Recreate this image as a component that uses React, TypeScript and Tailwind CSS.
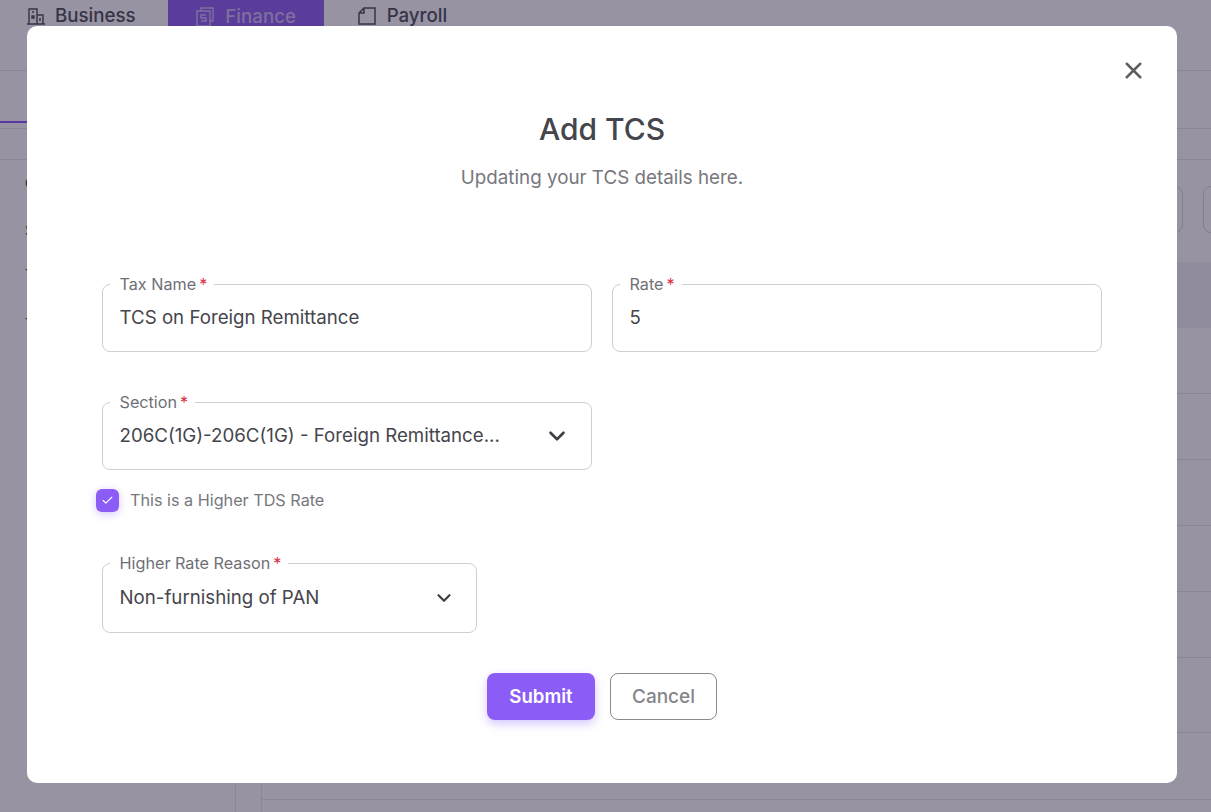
import { ChevronDown, X, Check } from "lucide-react";

const rows = [66, 66, 66, 66, 66, 75, 67];

const FloatLabel = ({ text }: { text: string }) => (
  <span className="absolute left-[6.5px] top-[-11px] flex h-[20px] items-center bg-white pl-[10px] pr-[7px] text-[16.2px] leading-[20px] text-[#6f6f76]">
    {text}
    <span className="ml-[3px] text-[#dc2f45]">*</span>
  </span>
);

const TextField = ({ label, value }: { label: string; value: string }) => (
  <div className="relative flex h-[68px] w-[490px] items-center rounded-[8px] border border-[#cfcfd2] pl-[16.5px] text-[18.7px] text-[#45454c]">
    <FloatLabel text={label} />
    <span>{value}</span>
  </div>
);

const SelectField = ({
  label,
  value,
  className,
  iconSize,
}: {
  label: string;
  value: string;
  className: string;
  iconSize: number;
}) => (
  <div
    className={`relative flex items-center justify-between rounded-[8px] border border-[#cfcfd2] pl-[16.5px] pr-[21px] text-[18.7px] text-[#45454c] ${className}`}
  >
    <FloatLabel text={label} />
    <span className="whitespace-nowrap">{value}</span>
    <ChevronDown size={iconSize} strokeWidth={2.4} className="text-[#3f3f46]" />
  </div>
);

const App = () => {
  return (
    <div className="relative h-[812px] w-[1211px] overflow-hidden bg-white font-['Inter',sans-serif]">
      {/* page behind the modal */}
      <div className="flex h-[71px] border-b border-[#e4e4e7] pl-[26px] text-[18.7px] font-medium text-[#3f3f46]">
        <div className="flex h-[32px] items-center gap-[9px]">
          <svg width="20" height="18" viewBox="0 0 20 18" fill="none" stroke="currentColor" strokeWidth="1.4">
            <path d="M1 17h18M3 17V2h8v15M11 8h6v9M6 5h2M6 9h2v2H6zM14 11v3" />
          </svg>
          <span>Business</span>
        </div>
        <div className="ml-[32px] flex h-[70px] w-[156px] items-start justify-center gap-[11px] bg-[#8450f0] pl-[1px] pt-[3px] text-white/60">
          <svg width="18" height="20" viewBox="0 0 18 20" fill="none" stroke="currentColor" strokeWidth="1.4" className="mt-[4px]">
            <path d="M5 4V1h12v13h-3M1 4h13v15H1zM10 8H5v3h5v3H5" />
          </svg>
          <span>Finance</span>
        </div>
        <div className="ml-[34px] flex h-[32px] items-center gap-[11px]">
          <svg width="18" height="18" viewBox="0 0 18 18" fill="none" stroke="currentColor" strokeWidth="1.5">
            <path d="M6 1h11v16H1V6zM6 1v5H1" />
          </svg>
          <span>Payroll</span>
        </div>
      </div>

      <div className="h-[58px] border-b border-[#e4e4e7] pt-[50px]">
        <div className="h-[2px] w-[60px] bg-[#7c4dff]" />
      </div>
      <div className="h-[31px] border-b border-[#e4e4e7]" />

      <div className="flex h-[652px]">
        <aside className="flex w-[236px] flex-col border-r border-[#e4e4e7] pl-[25px] text-[16px] text-[#27272a]">
          <span className="mt-[11px] font-semibold">Charges</span>
          <span className="mt-[23px]">Sales</span>
          <span className="mt-[21px]">TDS</span>
          <span className="mt-[25px]">TCS</span>
        </aside>
        <div className="ml-[25px] flex-1 border-l border-[#e4e4e7]">
          <div className="flex h-[102px] justify-end gap-[20px] pt-[26px]">
            <div className="h-[47px] w-[80px] rounded-[8px] border border-[#d4d4d8]" />
            <div className="mr-[-60px] h-[47px] w-[68px] rounded-[8px] border border-[#d4d4d8]" />
          </div>
          <div className="h-[66px] bg-[#f1f1f4]" />
          {rows.map((h, i) => (
            <div key={i} className="border-b border-[#e4e4e7]" style={{ height: h }} />
          ))}
        </div>
      </div>

      {/* modal */}
      <div className="absolute inset-0 bg-[#2f2745]/50 pl-[27px] pt-[26px]">
        <div className="relative h-[757px] w-[1150px] rounded-[10px] bg-white px-[75px]">
          <button className="absolute right-[30.5px] top-[31px] text-[#5f5f63]">
            <X size={27} strokeWidth={2.2} />
          </button>

          <h2 className="pt-[84px] text-center text-[30px] leading-[38px] font-medium text-[#45454c]">
            Add TCS
          </h2>
          <p className="mt-[16px] text-center text-[18.8px] leading-[28px] text-[#77777e]">
            Updating your TCS details here.
          </p>

          <div className="mt-[92px] flex gap-[20px]">
            <TextField label="Tax Name" value="TCS on Foreign Remittance" />
            <TextField label="Rate" value="5" />
          </div>

          <SelectField
            label="Section"
            value="206C(1G)-206C(1G) - Foreign Remittance..."
            className="mt-[50px] h-[68px] w-[490px]"
            iconSize={26}
          />

          <label className="mt-[18px] ml-[-6px] flex items-center gap-[11px]">
            <span className="flex h-[23px] w-[23px] items-center justify-center rounded-[6px] bg-[#8b5cf6] shadow-[0_2px_8px_rgba(139,92,246,0.35)]">
              <Check size={13} strokeWidth={2} className="text-white" />
            </span>
            <span className="text-[16.2px] text-[#77777e]">This is a Higher TDS Rate</span>
          </label>

          <SelectField
            label="Higher Rate Reason"
            value="Non-furnishing of PAN"
            className="mt-[51px] h-[70px] w-[375px]"
            iconSize={22}
          />

          <div className="mt-[40px] flex justify-center gap-[15px]">
            <button className="h-[47px] w-[108px] rounded-[8px] bg-[#8b5cf6] text-[18.6px] font-semibold text-white shadow-[0_4px_10px_rgba(139,92,246,0.35)]">
              Submit
            </button>
            <button className="h-[47px] w-[107px] rounded-[8px] border border-[#8a8a8a] text-[19px] font-medium text-[#85858a]">
              Cancel
            </button>
          </div>
        </div>
      </div>
    </div>
  );
};

export default App;
